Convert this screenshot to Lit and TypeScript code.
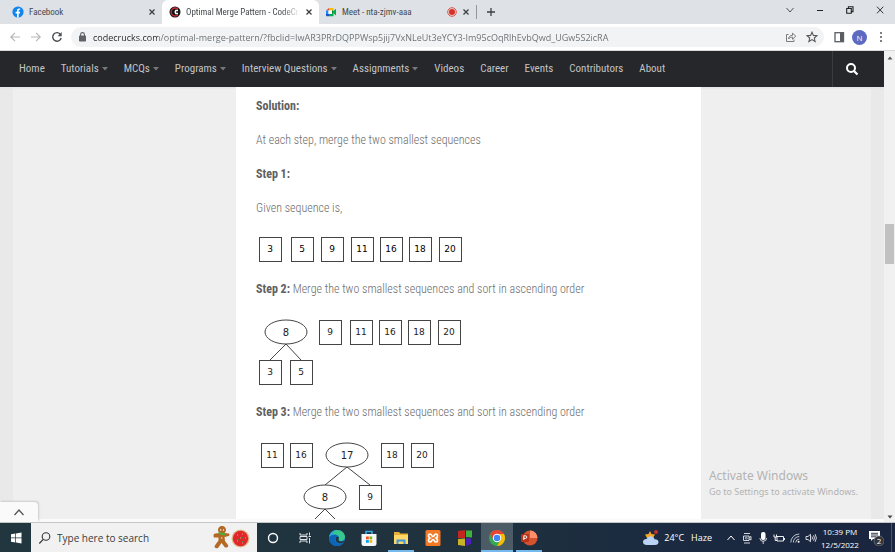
import { LitElement, html, css, svg } from "lit";
import { customElement, property } from "lit/decorators.js";
import { classMap } from "lit/directives/class-map.js";

type Shape = { kind: "box" | "oval"; x: number; y: number; label: string };
type Edge = [number, number, number, number];

const box = (x: number, y: number, label: string): Shape => ({ kind: "box", x, y, label });
const oval = (x: number, y: number, label: string): Shape => ({ kind: "oval", x, y, label });

const resets = css`
  * { box-sizing: border-box; }
  button, input { font: inherit; color: inherit; border: 0; padding: 0; margin: 0; background: none; outline: 0; }
  button { display: flex; align-items: center; justify-content: center; flex: none; }
  a { color: inherit; text-decoration: none; }
  svg { display: block; flex: none; }
`;

@customElement("merge-tree")
export class MergeTree extends LitElement {
  @property({ attribute: false }) shapes: Shape[] = [];
  @property({ attribute: false }) edges: Edge[] = [];
  @property({ type: Number }) height = 33;
  @property({ type: Boolean }) strong = false;

  static styles = css`
    :host { display: block; }
    svg { display: block; max-width: 100%; }
    .shape { fill: #fff; stroke: #444; stroke-width: 1; }
    .edge { stroke: #444; stroke-width: 1; }
    text { font-family: "DejaVu Sans", sans-serif; font-size: 9px; font-weight: 400; fill: #222; text-anchor: middle; }
    .oval { font-size: 10px; }
    .strong { fill: #000; }
  `;

  render() {
    return html`<svg width="220" height=${this.height} role="img" aria-label="Merge tree">
      ${this.edges.map(([a, b, c, d]) => svg`<line class="edge" x1=${a} y1=${b} x2=${c} y2=${d} />`)}
      ${this.shapes.map((s) =>
        s.kind === "box"
          ? svg`<rect class="shape" shape-rendering="crispEdges" x=${s.x - 11} y=${s.y - 12} width="22" height="24" />
                <text class=${classMap({ strong: this.strong })} x=${s.x} y=${s.y + 3}>${s.label}</text>`
          : svg`<ellipse class="shape" cx=${s.x} cy=${s.y} rx="21" ry="12" />
                <text class="oval" x=${s.x} y=${s.y + 4}>${s.label}</text>`
      )}
    </svg>`;
  }
}

@customElement("browser-chrome")
export class BrowserChrome extends LitElement {
  static styles = [resets, css`
    :host { display: block; font: 9px/14px "Open Sans", "Noto Sans", sans-serif; color: #45494d; }
    .strip { display: flex; height: 24px; background: #dee1e6; }
    .tab { flex: 0 1 157px; min-width: 0; display: flex; align-items: center; gap: 5px; padding: 0 6px 0 12px; }
    .tab:first-child { flex-basis: 162px; }
    .tab.active { background: #fff; border-radius: 6px 6px 0 0; padding-left: 7px; }
    .tab.last { padding-left: 6px; }
    .tab-title { flex: 1 1 0; min-width: 0; justify-content: flex-start; white-space: nowrap; font-family: "Roboto Condensed", sans-serif; }
    .active .tab-title { -webkit-mask: linear-gradient(90deg, #000 85%, transparent); }
    .rule { width: 1px; height: 14px; margin: 5px 8px 0 0; background: #93969a; }
    .window-buttons { display: flex; margin-left: auto; }
    .window-buttons button { width: 30px; height: 20px; }
    .bar { display: flex; align-items: center; height: 27px; padding-right: 4px; background: #fff; border-bottom: 1px solid #d8d8d8; }
    .bar > button { width: 21px; height: 22px; }
    .bar > .back { margin-left: 4px; }
    .address { flex: 1; min-width: 0; display: flex; align-items: center; gap: 5px; height: 20px; margin: 0 4px 0 4px; padding: 0 2px 0 6px; border-radius: 10px; background: #f1f3f4; }
    .address-tools { display: flex; flex: none; }
    .address button { width: 21px; height: 20px; }
    .address input { flex: 1; min-width: 0; height: 20px; color: transparent; background: linear-gradient(90deg, #24272a 65px, #686d72 65px); -webkit-background-clip: text; background-clip: text; }
    .avatar { width: 15px; height: 15px; border-radius: 8px; background: #5c6bc0; color: #fff; font-size: 8px; line-height: 15px; text-align: center; }
  `];

  private close(label: string) {
    return html`<button aria-label=${label}><svg width="8" height="8" viewBox="0 0 8 8"><path d="M1.500 1.500l5 5m0-5l-5 5" stroke="#3c4043" stroke-width="1.300" /></svg></button>`;
  }

  render() {
    return html`
      <div class="strip">
        <div class="tab">
          <svg width="12" height="12" viewBox="0 0 12 12"><circle cx="6" cy="6" r="5.600" fill="#1184ee" /><path d="M5 11.600V7.400H3.600V5.800H5V4.700C5 3.200 5.800 2.400 7.100 2.400H8.200V3.800H7.500C6.900 3.800 6.700 4.100 6.700 4.700V5.800H8.200L7.900 7.400H6.700V11.600Z" fill="#fff" /></svg>
          <button class="tab-title">Facebook</button>
          ${this.close("Close Facebook")}
        </div>
        <div class="tab active">
          <svg width="12" height="12" viewBox="0 0 12 12"><circle cx="6" cy="6" r="5.500" fill="#151515" /><path d="M9 3.200A4 4 0 1 0 9 8.800" fill="none" stroke="#c62b35" stroke-width="1.300" /><path d="M9 4.500H6.800Q5.400 6 6.800 7.500H9" fill="none" stroke="#fff" stroke-width="1.400" /></svg>
          <button class="tab-title">Optimal Merge Pattern - CodeCr</button>
          ${this.close("Close Optimal Merge Pattern")}
        </div>
        <div class="tab last">
          <svg width="12" height="12" viewBox="0 0 12 12"><path d="M1 4.500L4 2V4.500Z" fill="#e94235" /><path d="M4 2H8.500V4.500H4Z" fill="#fbbc04" /><path d="M1 4.500H3.500V8H1Z" fill="#2684fc" /><path d="M1 8H4V10.200H2C1.400 10.200 1 9.800 1 9.200Z" fill="#1554c8" /><path d="M4 7.800H8.500V10.200H4ZM8.500 5L11 2.800V9.400L8.500 7.300Z" fill="#00ac47" /><path d="M7 4.500H8.500V7.800H7Z" fill="#00832d" /><path d="M3.500 4.500H7V7.800H3.500Z" fill="#fff" /></svg>
          <button class="tab-title">Meet - nta-zjmv-aaa</button>
          <svg width="10" height="10" viewBox="0 0 10 10"><circle cx="5" cy="5" r="4.300" fill="none" stroke="#d93025" stroke-width=".8" /><circle cx="5" cy="5" r="3" fill="#d93025" /></svg>
          ${this.close("Close Meet")}
        </div>
        <div class="rule"></div>
        <button aria-label="New tab"><svg width="12" height="12" viewBox="0 0 12 12"><path d="M6 2V10M2 6H10" stroke="#3c4043" stroke-width="1.300" /></svg></button>
        <div class="window-buttons">
          <button aria-label="Search tabs"><svg width="10" height="10" viewBox="0 0 10 10"><path d="M1.500 3L5 7L8.500 3" fill="none" stroke="#555" /></svg></button>
          <button aria-label="Minimize"><svg width="8" height="8" viewBox="0 0 8 8"><path d="M1 4.500H7" stroke="#222" /></svg></button>
          <button aria-label="Restore"><svg width="8" height="8" viewBox="0 0 8 8"><path d="M.7 2.500H5.300V7.300H.7ZM2.400 2.500V.8H7V5.600H5.300" fill="none" stroke="#222" stroke-width="1.100" /></svg></button>
          <button aria-label="Close window"><svg width="8" height="8" viewBox="0 0 8 8"><path d="M1 .7L7.300 7.300M7.300 .7L1 7.300" stroke="#333" /></svg></button>
        </div>
      </div>
      <div class="bar">
        <button class="back" aria-label="Back"><svg width="12" height="12" viewBox="0 0 12 12"><path d="M11 6H2M6 1.800L1.800 6L6 10.200" fill="none" stroke="#b5b7ba" stroke-width="1.200" /></svg></button>
        <button aria-label="Forward"><svg width="12" height="12" viewBox="0 0 12 12"><path d="M1 6H10M6 1.800L10.200 6L6 10.200" fill="none" stroke="#b5b7ba" stroke-width="1.200" /></svg></button>
        <button aria-label="Reload"><svg width="12" height="12" viewBox="0 0 12 12"><path d="M9.600 3.500A4.300 4.300 0 1 0 10.200 7" fill="none" stroke="#4a4d51" stroke-width="1.400" /><path d="M10.700 1V5.200H6.600Z" fill="#4a4d51" /></svg></button>
        <div class="address">
          <svg width="11" height="12" viewBox="0 0 11 12"><rect x="2" y="4.500" width="7" height="6" rx=".8" fill="#5f6368" /><path d="M3.600 5V3.500A1.900 1.900 0 0 1 7.400 3.500V5" fill="none" stroke="#5f6368" stroke-width="1.100" /></svg>
          <input aria-label="Address" value="codecrucks.com/optimal-merge-pattern/?fbclid=IwAR3PRrDQPPWsp5jij7VxNLeUt3eYCY3-Im95cOqRlhEvbQwd_UGw5S2icRA" />
          <div class="address-tools">
            <button aria-label="Share"><svg width="12" height="12" viewBox="0 0 12 12"><path d="M3.500 3.500H1.500V10.500H9V8.500M3.500 8C3.800 5.500 5.200 4.300 7.500 4.300V2.200L10.800 5.200L7.500 8.200V6.200C5.700 6.200 4.500 6.700 3.500 8Z" fill="none" stroke="#6b6f73" stroke-width=".9" /></svg></button>
            <button aria-label="Bookmark"><svg width="12" height="12" viewBox="0 0 12 12"><path d="M6 1.200L7.400 4.400L10.900 4.700L8.300 7L9.100 10.500L6 8.600L2.900 10.500L3.700 7L1.100 4.700L4.600 4.400Z" fill="none" stroke="#55595d" stroke-width="1.100" /></svg></button>
          </div>
        </div>
        <button aria-label="Side panel"><svg width="12" height="12" viewBox="0 0 12 12"><rect x="2" y="1.700" width="8.500" height="9" fill="none" stroke="#5a5e62" stroke-width="1.300" /><rect x="7" y="1.700" width="3.500" height="9" fill="#5a5e62" /></svg></button>
        <button aria-label="Profile"><span class="avatar">N</span></button>
        <button aria-label="Menu"><svg width="4" height="12" viewBox="0 0 4 12"><circle cx="2" cy="2" r="1" fill="#555" /><circle cx="2" cy="6" r="1" fill="#555" /><circle cx="2" cy="10" r="1" fill="#555" /></svg></button>
      </div>`;
  }
}

@customElement("task-bar")
export class TaskBar extends LitElement {
  static styles = [resets, css`
    :host { display: flex; height: 29px; color: #fff; background: linear-gradient(90deg, #21363f, #1f323e 50%, #1b2a40 75%, #1a2540); font: 10px/13px "Open Sans", "Noto Sans", sans-serif; }
    button { width: 32px; border-bottom: 2px solid transparent; padding-top: 2px; }
    .start { width: 31px; }
    .search { flex: 0 1 226px; min-width: 0; display: flex; align-items: center; gap: 5px; padding: 0 7px 0 7px; background: #f1f1f1; color: #333; }
    .search input { flex: 1; min-width: 0; color: #333; height: 20px; }
    .search input::placeholder { color: #3c3c3c; opacity: 1; }
    .open { background: linear-gradient(#76b9ed, #76b9ed) bottom / 26px 2px no-repeat border-box; }
    .current { background: #4c5c66; border-color: #76b9ed; }
    .tray { margin-left: auto; display: flex; }
    .weather { width: auto; gap: 4px; padding-right: 11px; font-size: 9px; }
    .haze { margin-left: 3px; }
    .tray-icon { width: 16px; }
    .clock { width: 42px; font-size: 8px; text-align: center; }
    .notes { width: 30px; }
    .edge { width: 4px; border-left: 1px solid #4a556a; }
  `];

  render() {
    return html`
      <button class="start" aria-label="Start"><svg width="12" height="12" viewBox="0 0 12 12"><path d="M1 2.300L5.300 1.500V5.600H1ZM6 1.400L11.500.5V5.600H6ZM1 6.300H5.300V10.500L1 9.800ZM6 6.300H11.500V11.500L6 10.600Z" fill="#fff" /></svg></button>
      <div class="search">
        <svg width="14" height="14" viewBox="0 0 14 14"><circle cx="8" cy="5.500" r="3.800" fill="none" stroke="#333" stroke-width="1.100" /><path d="M5.200 8.300L1.300 12.500" stroke="#333" stroke-width="1.200" /></svg>
        <input aria-label="Search" placeholder="Type here to search" />
        <svg width="38" height="24" viewBox="0 0 38 24"><path d="M7.500 7A4 4 0 1 1 12.500 7L17 7.500Q18.500 10 16 10.300L12.500 11L13 15L16 19Q17 22 13 21.500L9.500 17L6 22Q2.500 23 2.500 20L6.500 14.500L6.500 11.500L2 11.500Q.5 8.500 3 7.500Z" fill="#b46a24" /><path d="M6.500 7L13 8.500" stroke="#4caf3c" stroke-width="2" /><circle cx="8.700" cy="4" r=".7" fill="#fff" /><circle cx="11.500" cy="4" r=".7" fill="#fff" /><circle cx="9.700" cy="12" r=".8" fill="#f9e0a0" /><circle cx="28.500" cy="12.500" r="9" fill="#ddb98a" /><circle cx="28.500" cy="12.500" r="7.700" fill="#e1272b" /><path d="M25 9h1m4-1h1m2 4h1m-9 3h1m4 2h1m-3-5h1" stroke="#ff9a8c" stroke-width="1.200" /><path d="M25 13l2 1m2-3l2 1m-1 4l2-1" stroke="#3b8e32" stroke-width="1.200" /></svg>
      </div>
      <button aria-label="Cortana"><svg width="14" height="14" viewBox="0 0 14 14"><circle cx="7" cy="7" r="4.500" fill="none" stroke="#fff" stroke-width="1.400" /></svg></button>
      <button aria-label="Task view"><svg width="14" height="14" viewBox="0 0 14 14"><path d="M2 2v2h7V2M2 12v-2h7v2M2 5.500h7v3H2zM11.500 1.500v3M11.500 7v5.500M10.500 5.500h2.500" fill="none" stroke="#dfe3e6" stroke-width="1" /></svg></button>
      <button aria-label="Edge"><svg width="18" height="18" viewBox="0 0 18 18"><circle cx="9" cy="9" r="8" fill="#1683d8" /><path d="M1.200 8C2.500 3 5.500 1 9 1C14 1 17 4.500 17 8C17 10.500 15 12 12.500 12C10.500 12 10 11.200 10.500 10.500C12 8 10 5.500 7 5.500C4.500 5.500 2.500 6.300 1.200 8Z" fill="#36c98d" /><path d="M1.200 8C2.500 3 5.500 1 9 1C6 2 4 4 7 5.500C4.500 5.500 2.500 6.300 1.200 8Z" fill="#2aa9d6" /><path d="M1.200 8C3 5.500 8 4.500 10 7.500C7 7 6 11 8 13C10 15 13 15 15.500 13.500C13.500 16.500 11 17.300 8 17C4 16.500 .5 13 1.200 8Z" fill="#0d65b5" /><path d="M10.500 10.500C10 12 13 13.500 16 11.500L15.500 13.500C12 15 7.500 14 7.500 10C7.500 8.500 8.500 7.500 10 7.500C11 8.500 11 9.500 10.500 10.500Z" fill="#21363f" /></svg></button>
      <button aria-label="Store"><svg width="16" height="18" viewBox="0 0 16 18"><path d="M5 5V2.500H11V5" fill="none" stroke="#35a9e8" stroke-width="1.600" /><path d="M.5 5H15.500V14.500Q15.500 17 13 17H3Q.5 17 .5 14.500Z" fill="#f4f6f7" /><path d="M5 7.500h2.800v2.800H5z" fill="#f25022" /><path d="M8.400 7.500h2.800v2.800H8.400z" fill="#7fba00" /><path d="M5 11h2.800v2.800H5z" fill="#00a4ef" /><path d="M8.400 11h2.800v2.800H8.400z" fill="#ffb900" /></svg></button>
      <button class="open" aria-label="File Explorer"><svg width="16" height="16" viewBox="0 0 16 16"><path d="M1 2H6L7.500 3.500H15V14H1Z" fill="#e9ae37" /><path d="M1 5H15V14H1Z" fill="#ffd766" /><path d="M3.500 14V9.500H12.500V14H10.500V11.500H5.500V14Z" fill="#3c97dd" /></svg></button>
      <button aria-label="XAMPP"><svg width="16" height="18" viewBox="0 0 16 18"><rect x=".5" y="1" width="15" height="16" rx="1.500" fill="#f37a25" /><path d="M5 5C3 5 3 8 5 9C3 10 3 13 5 13C7 13 6.500 10.500 8 10.500C9.500 10.500 9 13 11 13C13 13 13 10 11 9C13 8 13 5 11 5C9 5 9.500 7.500 8 7.500C6.500 7.500 7 5 5 5Z" fill="none" stroke="#fff" stroke-width="1.700" /></svg></button>
      <button aria-label="Blocks"><svg width="16" height="18" viewBox="0 0 16 18"><path d="M1 2L8 1V9H1Z" fill="#c52622" /><path d="M9 1.500H15V8.500L9 8Z" fill="#3eb43b" /><path d="M1 10L8 9.500V17L1 16Z" fill="#c9b428" /><path d="M9 9L14 9.500V15L9 17Z" fill="#4a22b5" /></svg></button>
      <button class="current" aria-label="Chrome"><svg width="18" height="18" viewBox="0 0 18 18"><circle cx="9" cy="9" r="8" fill="#34a853" /><path d="M2.070 5A8 8 0 0 1 15.930 5H9A4 4 0 0 0 5.540 7L5.540 11Z" fill="#ea4335" /><path d="M15.930 5A8 8 0 0 1 9 17L12.460 11A4 4 0 0 0 9 5Z" fill="#fbbc04" /><circle cx="9" cy="9" r="4.200" fill="#fff" /><circle cx="9" cy="9" r="3.200" fill="#4285f4" /></svg></button>
      <button class="open" aria-label="PowerPoint"><svg width="18" height="18" viewBox="0 0 18 18"><circle cx="10" cy="9" r="7.500" fill="#d35230" /><path d="M10 1.500A7.500 7.500 0 0 1 17.500 9H10Z" fill="#ff8f6b" /><rect x="1" y="5" width="8" height="8" rx="1" fill="#b7331a" /><path d="M3.800 11V6.800H5.400Q6.800 6.900 6.800 8.100Q6.800 9.400 5.400 9.400H3.800" fill="none" stroke="#fff" /></svg></button>
      <div class="tray">
        <button class="weather"><svg width="18" height="18" viewBox="0 0 18 18"><path d="M8 2L9.500 5L13 5.500L11 9H5L3 5.500L6.500 5Z" fill="#f5a623" /><path d="M5 16Q1 16 1 12.800Q1.300 10 4.500 10Q6 7 9 7.200Q12 7.500 12.700 10.300Q16.500 10.500 16.500 13.300Q16.300 16 13 16Z" fill="#b9d4f7" /><circle cx="14" cy="3" r="2" fill="#c9302c" /></svg><span>24°C</span><span class="haze">Haze</span></button>
        <button class="tray-icon" aria-label="Show hidden icons"><svg width="10" height="10" viewBox="0 0 10 10"><path d="M1.500 7L5 3L8.500 7" fill="none" stroke="#fff" /></svg></button>
        <button class="tray-icon" aria-label="Meet now"><svg width="10" height="12" viewBox="0 0 10 12"><path d="M2 1.500H8M2 11H8M1.500 4H7V8.500H1.500ZM7 5.500L9 4.500V8L7 7" fill="none" stroke="#e6e9ed" stroke-width=".9" /><circle cx="4.300" cy="6.200" r="1" fill="none" stroke="#e6e9ed" stroke-width=".7" /></svg></button>
        <button class="tray-icon" aria-label="Microphone"><svg width="10" height="12" viewBox="0 0 10 12"><rect x="3" y="0" width="4.500" height="8" rx="2" fill="#fff" /><path d="M1.800 6Q2 9.300 5.200 9.300Q8.500 9.300 8.600 6M5.200 9.300V12" fill="none" stroke="#e6e9ed" stroke-width=".9" /></svg></button>
        <button class="tray-icon" aria-label="Battery"><svg width="12" height="10" viewBox="0 0 12 10"><path d="M4 3.500H10.500V8H4ZM11.500 5V7M1 1.500V4H3.500V1.500M2.200 4V7.500H4" fill="none" stroke="#fff" stroke-width=".9" /></svg></button>
        <button class="tray-icon" aria-label="Network"><svg width="10" height="10" viewBox="0 0 10 10"><path d="M.8 9.500A8.500 8.500 0 0 1 9.300 1M3.300 9.500A6 6 0 0 1 9.300 3.500M5.600 9.500A4 4 0 0 1 9.300 6" fill="none" stroke="#cfd5dc" stroke-width=".9" /><circle cx="8.600" cy="8.800" r="1" fill="#fff" /></svg></button>
        <button class="tray-icon" aria-label="Volume"><svg width="12" height="10" viewBox="0 0 12 10"><path d="M1 3.500H3L5.500 1.300V8.700L3 6.500H1ZM7 3.500Q8 5 7 6.500M8.600 2.300Q10.200 5 8.600 7.700M10.200 1.200Q12.500 5 10.200 8.800" fill="none" stroke="#e6e9ed" stroke-width=".9" /></svg></button>
        <button class="clock">10:39 PM<br />12/5/2022</button>
        <button class="notes" aria-label="2 notifications"><svg width="16" height="16" viewBox="0 0 16 16"><path d="M1 1H12V9H5L3 11V9H1Z" fill="#fff" /><path d="M3 3.300H10M3 5H10M3 6.800H8" stroke="#1b2740" stroke-width=".9" /><circle cx="11" cy="11" r="5" fill="#30343c" stroke="#888" stroke-width=".6" /><text x="11" y="14" text-anchor="middle" font-size="8" fill="#fff">2</text></svg></button>
        <div class="edge"></div>
      </div>`;
  }
}

@customElement("app-root")
export class AppRoot extends LitElement {
  static styles = [resets, css`
    :host { display: flex; flex-direction: column; height: 100vh; overflow: hidden; background: #fafafa; font-family: "Roboto Condensed", "Liberation Sans Narrow", Roboto, sans-serif; }
    browser-chrome, task-bar { flex: none; }
    .view { position: relative; flex: 1; min-height: 0; display: flex; border-bottom: 1px solid #c6c6c6; }
    .page { flex: 1; min-width: 0; display: flex; flex-direction: column; }
    nav { flex: none; display: flex; align-items: center; height: 36px; padding-left: 19px; gap: 16px; background: #26272b; color: #c3c3c5; font-size: 11px; line-height: 16px; white-space: nowrap; }
    nav a { display: flex; align-items: center; gap: 3px; }
    .find { margin-left: auto; width: 52px; height: 36px; border-left: 1px solid #3b3c40; padding-right: 13px; }
    .body { flex: 1; min-height: 0; display: grid; grid-template-columns: 223fr 465fr 170fr; padding: 0 13px; background: linear-gradient(#e3e3e3, transparent 3px), linear-gradient(90deg, #e9e9e9 13px, #efefef 13px calc(100% - 13px), #e9e9e9 calc(100% - 13px)); }
    article { grid-column: 2; min-height: 0; overflow: hidden; padding: 9px 20px 0; background: #fff; color: #6c6c6c; font-size: 12px; line-height: 20px; font-weight: 300; display: flex; flex-direction: column; gap: 14px; }
    article p, article h2 { margin: 0; font-size: 12px; line-height: 20px; }
    article h2, article strong { font-weight: 700; color: #606060; }
    merge-tree { flex: none; }
    .scroll { width: 11px; flex: none; display: flex; flex-direction: column; align-items: center; justify-content: space-between; background: #f1f1f1; padding: 4px 0 2px; }
    .track { flex: 1; display: flex; flex-direction: column; width: 9px; }
    .before { flex: 163; }
    .thumb { flex: 40; background: #c1c1c1; }
    .after { flex: 250; }
    .base { flex: none; height: 3px; background: #fafafa; }
    .shelf { position: absolute; left: 0; bottom: 0; width: 38px; height: 20px; background: #fafafa; border-radius: 0 4px 0 0; box-shadow: 1px -1px 2px #ccc; }
    .notice { position: absolute; right: 37px; bottom: 22px; color: #b3b3b3; font: 9px/16px "Noto Sans", sans-serif; white-space: nowrap; }
    .notice div:first-child { font-size: 12px; }
  `];

  private links: [string, boolean][] = [
    ["Home", false], ["Tutorials", true], ["MCQs", true], ["Programs", true],
    ["Interview Questions", true], ["Assignments", true], ["Videos", false],
    ["Career", false], ["Events", false], ["Contributors", false], ["About", false],
  ];

  private first = [box(14, 17, "3"), box(46, 17, "5"), box(76, 17, "9"), box(106, 17, "11"), box(135, 17, "16"), box(164, 17, "18"), box(194, 17, "20")];

  private second = [oval(30, 19, "8"), box(74, 19, "9"), box(105, 19, "11"), box(134, 19, "16"), box(163, 19, "18"), box(193, 19, "20"), box(14, 59, "3"), box(45, 59, "5")];

  private secondEdges: Edge[] = [[30, 31, 14, 47], [30, 31, 45, 47]];

  private third = [box(16, 19, "11"), box(45, 19, "16"), oval(91, 19, "17"), box(136, 19, "18"), box(166, 19, "20"), oval(69, 61, "8"), box(114, 61, "9")];

  private thirdEdges: Edge[] = [[91, 31, 69, 49], [91, 31, 114, 49], [69, 73, 57, 85], [69, 73, 81, 85]];

  render() {
    return html`
      <browser-chrome></browser-chrome>
      <div class="view">
        <div class="page">
          <nav>
            ${this.links.map(([name, menu]) => html`<a href="#">${name}${menu
              ? html`<svg width="6" height="4" viewBox="0 0 6 4"><path d="M0 0H6L3 3.500Z" fill="#77787c" /></svg>` : ""}</a>`)}
            <button class="find" aria-label="Search site"><svg width="14" height="14" viewBox="0 0 14 14"><circle cx="6" cy="6" r="4" fill="none" stroke="#fff" stroke-width="2" /><path d="M9 9L12.500 12.500" stroke="#fff" stroke-width="2.200" /></svg></button>
          </nav>
          <div class="body">
            <article>
              <h2>Solution:</h2>
              <p>At each step, merge the two smallest sequences</p>
              <h2>Step 1:</h2>
              <p>Given sequence is,</p>
              <merge-tree strong .shapes=${this.first} .height=${33}></merge-tree>
              <p><strong>Step 2:</strong> Merge the two smallest sequences and sort in ascending order</p>
              <merge-tree .shapes=${this.second} .edges=${this.secondEdges} .height=${75}></merge-tree>
              <p><strong>Step 3:</strong> Merge the two smallest sequences and sort in ascending order</p>
              <merge-tree .shapes=${this.third} .edges=${this.thirdEdges} .height=${90}></merge-tree>
            </article>
          </div>
          <div class="base"></div>
        </div>
        <div class="scroll">
          <svg width="6" height="6" viewBox="0 0 6 6"><path d="M.5 4.500L3 1.500L5.500 4.500Z" fill="#555" /></svg>
          <div class="track"><div class="before"></div><div class="thumb"></div><div class="after"></div></div>
          <svg width="6" height="6" viewBox="0 0 6 6"><path d="M.5 1.500L3 4.500L5.500 1.500Z" fill="#444" /></svg>
        </div>
        <button class="shelf" aria-label="Show shelf"><svg width="12" height="8" viewBox="0 0 12 8"><path d="M1.500 7L6 2L10.500 7" fill="none" stroke="#555" stroke-width="1.300" /></svg></button>
        <div class="notice"><div>Activate Windows</div><div>Go to Settings to activate Windows.</div></div>
      </div>
      <task-bar></task-bar>`;
  }
}
